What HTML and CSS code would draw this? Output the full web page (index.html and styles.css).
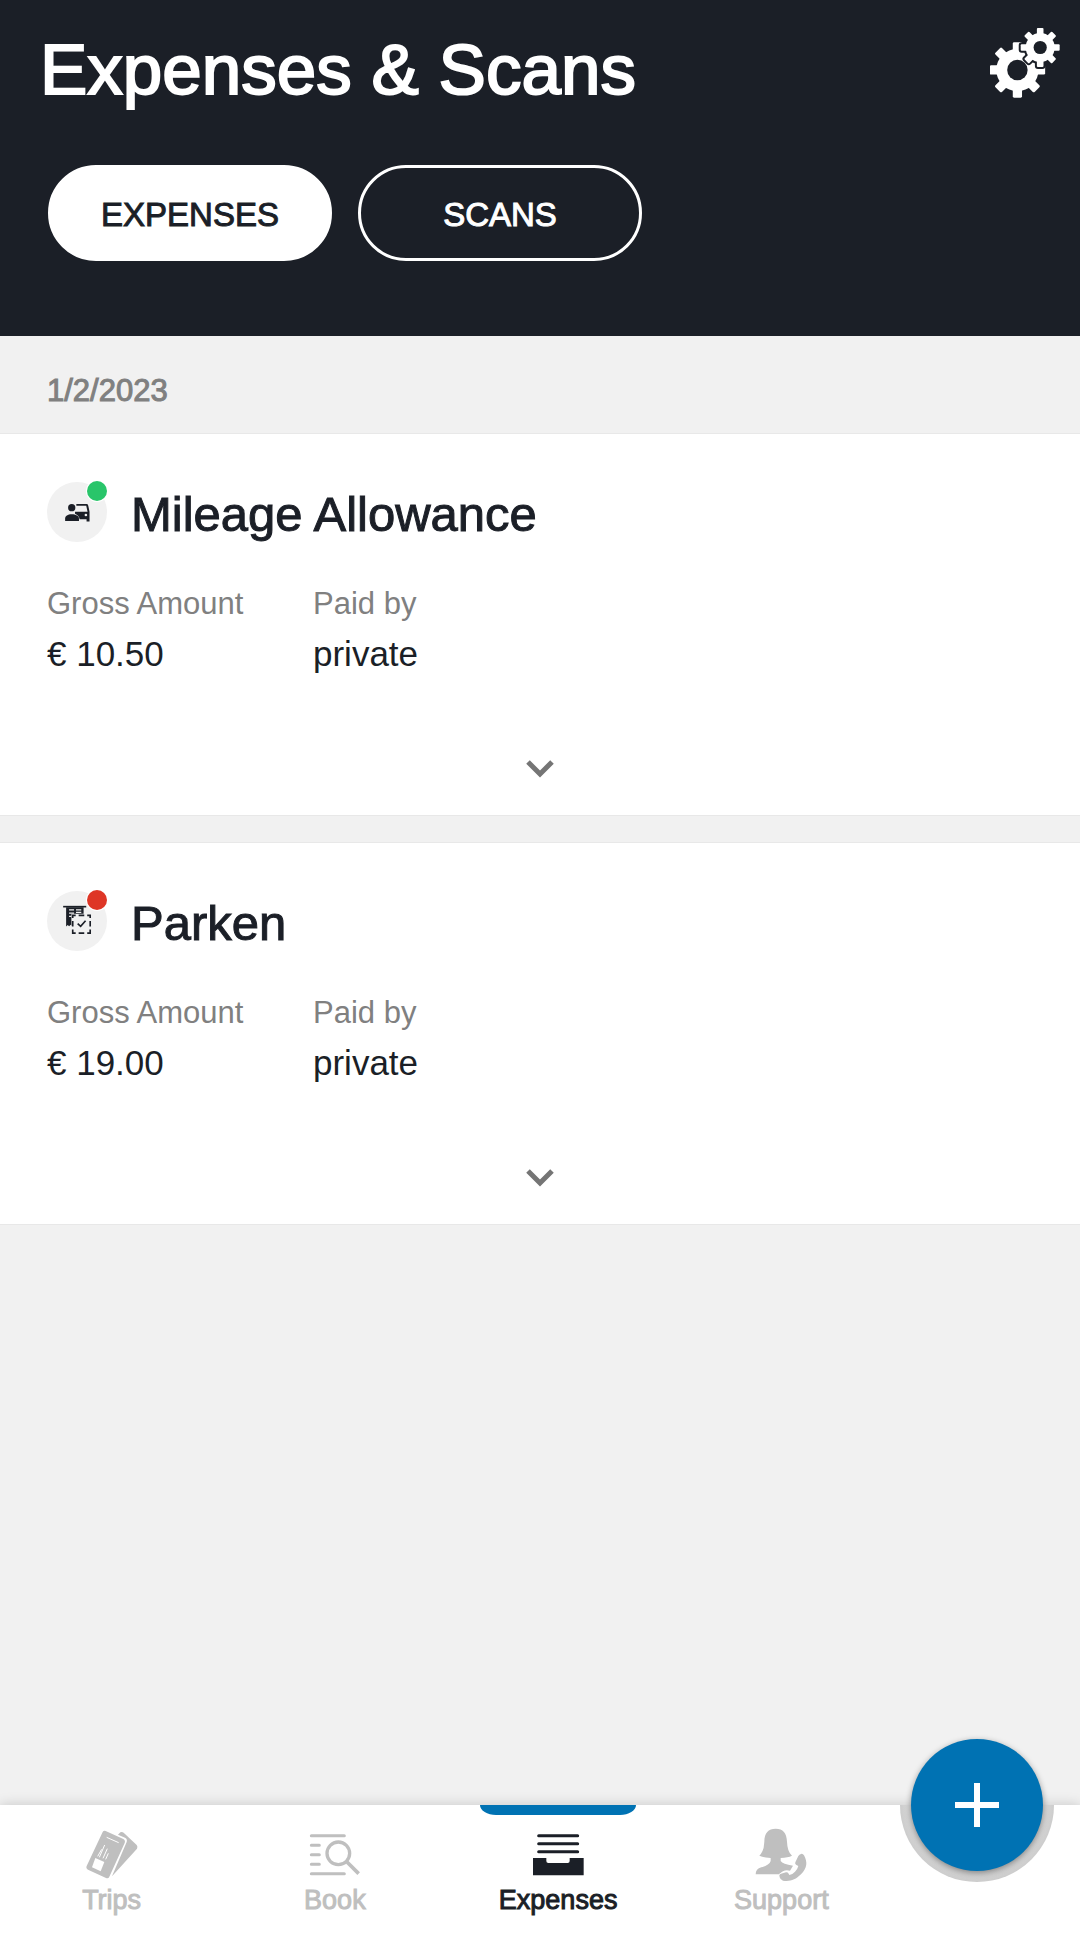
FILE: index.html
```
<!DOCTYPE html>
<html lang="en">
<head>
    <meta charset="UTF-8">
    <meta name="viewport" content="width=device-width, initial-scale=1.0">
    <title>Expenses &amp; Scans</title>
    <link rel="stylesheet" href="styles.css">
</head>
<body>
    <header>
        <div class="title-row">
            <h1>Expenses &amp; Scans</h1>
            <button type="button" class="settings" aria-label="Settings">
                <svg viewBox="56 52 212 212">
                    <defs>
                        <g id="big-gear">
                            <circle cx="139" cy="179" r="64"/>
                            <rect x="125" y="95" width="28" height="168" rx="4"/>
                            <rect x="125" y="95" width="28" height="168" rx="4" transform="rotate(45 139 179)"/>
                            <rect x="125" y="95" width="28" height="168" rx="4" transform="rotate(90 139 179)"/>
                            <rect x="125" y="95" width="28" height="168" rx="4" transform="rotate(135 139 179)"/>
                        </g>
                        <g id="small-gear">
                            <circle cx="208" cy="111" r="44"/>
                            <rect x="198" y="52" width="20" height="118" rx="3"/>
                            <rect x="198" y="52" width="20" height="118" rx="3" transform="rotate(45 208 111)"/>
                            <rect x="198" y="52" width="20" height="118" rx="3" transform="rotate(90 208 111)"/>
                            <rect x="198" y="52" width="20" height="118" rx="3" transform="rotate(135 208 111)"/>
                        </g>
                    </defs>
                    <use href="#big-gear" fill="#fff"/>
                    <circle cx="139" cy="179" r="31" fill="#1b1f27"/>
                    <use href="#small-gear" fill="#1b1f27" stroke="#1b1f27" stroke-width="12"/>
                    <use href="#small-gear" fill="#fff"/>
                    <circle cx="208" cy="111" r="20" fill="#1b1f27"/>
                </svg>
            </button>
        </div>
        <div class="pills">
            <button type="button" class="pill active">EXPENSES</button>
            <button type="button" class="pill">SCANS</button>
        </div>
    </header>

    <main>
        <p class="date">1/2/2023</p>

        <div class="cards">
            <section class="card">
                <div class="card-head">
                    <div class="badge">
                        <svg viewBox="20 32 182 182">
                            <circle cx="95" cy="110" r="11"/>
                            <path d="M75 150v-7c0-8 8-13 20-13s22 5 22 13v7z"/>
                            <path d="M109 99h31q4 0 5 4l4 19v30h-9v-7h-21c-1-8-6-14-14-17v-6h38l-4-18h-30z"/>
                            <circle cx="138" cy="132" r="4" fill="#f1f1f1"/>
                        </svg>
                        <span class="dot green"></span>
                    </div>
                    <h2>Mileage Allowance</h2>
                </div>
                <dl class="details">
                    <div>
                        <dt>Gross Amount</dt>
                        <dd>€ 10.50</dd>
                    </div>
                    <div>
                        <dt>Paid by</dt>
                        <dd>private</dd>
                    </div>
                </dl>
                <button type="button" class="expand" aria-label="Show details">
                    <svg viewBox="0 0 40 40"><path d="M8 14l12 12 12-12"/></svg>
                </button>
            </section>

            <section class="card">
                <div class="card-head">
                    <div class="badge">
                        <svg viewBox="20 32 182 182">
                            <path d="M69 77h70v5h-70z"/>
                            <path d="M78 81h53v20h-35v37l-4-4-5 5-4-4-5 5z"/>
                            <path d="M87 89h15M108 89h16M87 99h15M108 97h16M87 109h7" fill="none" stroke="#f1f1f1" stroke-width="4"/>
                            <rect x="94" y="102" width="60" height="60" fill="#f1f1f1"/>
                            <path d="M98 114v-8h9M116 106h17M142 106h9v8M151 123v17M151 149v11h-9M133 160h-17M107 160h-9v-11M98 140v-17" fill="none" stroke="#1b1f27" stroke-width="5"/>
                            <path d="M113 131l9 8 15-17" fill="none" stroke="#1b1f27" stroke-width="5"/>
                        </svg>
                        <span class="dot red"></span>
                    </div>
                    <h2>Parken</h2>
                </div>
                <dl class="details">
                    <div>
                        <dt>Gross Amount</dt>
                        <dd>€ 19.00</dd>
                    </div>
                    <div>
                        <dt>Paid by</dt>
                        <dd>private</dd>
                    </div>
                </dl>
                <button type="button" class="expand" aria-label="Show details">
                    <svg viewBox="0 0 40 40"><path d="M8 14l12 12 12-12"/></svg>
                </button>
            </section>
        </div>
    </main>

    <nav>
        <a href="#trips" class="tab">
            <svg viewBox="65 102 180 180">
                <path d="M173 134l7-7q5-3 10 1l39 37q4 5 1 11l-75 83 44-103q3-9-5-13z"/>
                <path d="M127 126q3-5 9-3l53 24q7 4 4 12l-46 101q-3 7-10 4l-54-25q-7-4-4-11z"/>
                <path d="M139 142l36 16M133 165l-16 37M141 176l-13 29M144 190l-8 18M124 178l-12 21" fill="none" stroke="#fff" stroke-width="3"/>
                <path d="M105 204l27 12-11 28-26-12z" fill="#fff"/>
            </svg>
            <span>Trips</span>
        </a>
        <a href="#book" class="tab">
            <svg viewBox="735 102 180 180">
                <g fill="none" stroke="currentColor" stroke-width="9" stroke-linecap="round">
                    <path d="M754 137h99M754 166h24M754 194h24M754 223h24M754 251h99"/>
                    <circle cx="835" cy="190" r="34" stroke-width="10"/>
                    <path d="M861 216l35 35" stroke-width="11" stroke-linecap="butt"/>
                </g>
            </svg>
            <span>Book</span>
        </a>
        <a href="#expenses" class="tab current">
            <svg viewBox="264 102 180 180">
                <path d="M296 137h117M296 161h117M296 185h117" stroke="currentColor" stroke-width="9" stroke-linecap="round"/>
                <path d="M279 204h40v9q0 6 6 6h58q6 0 6-6v-9h42v52H279z"/>
            </svg>
            <span>Expenses</span>
        </a>
        <a href="#support" class="tab">
            <svg viewBox="934 102 180 180">
                <path d="M959 197q14-12 15-42c0-26 12-39 34-39s33 13 34 39q1 30 15 42-12 6-34 7v9q6 10 37 14l-9 15q-18-6-32 11H948q0-16 17-21 24-6 28-19v-9q-22-1-34-7z"/>
                <path d="M1084 192q5-2 9 4c11 21 10 38-9 57-17 17-33 22-54 19q-8-2-10-10l-1-6q1-4 5-5l15-4q5-1 7 3l3 5q10-2 17-10 8-8 10-17l-7-4q-4-3-2-7l9-19q3-5 8-6z" fill="currentColor" stroke="#fff" stroke-width="4" paint-order="stroke"/>
            </svg>
            <span>Support</span>
        </a>
        <div class="fab-slot">
            <div class="notch"></div>
            <button type="button" class="fab" aria-label="Add expense">
                <svg viewBox="0 0 44 44"><path d="M22 0v44M0 22h44"/></svg>
            </button>
        </div>
    </nav>
</body>
</html>
```

FILE: styles.css
```
* {
    box-sizing: border-box;
}
body {
    display: flex;
    flex-direction: column;
    min-height: 100vh;
    margin: 0;
    font-family: "Liberation Sans", Arial, sans-serif;
    color: #1b1f27;
    background-color: #f1f1f1;
}
h1, h2, p, dl, dd {
    margin: 0;
}
button {
    padding: 0;
    border: none;
    background: none;
    font-family: inherit;
    color: inherit;
    cursor: pointer;
}
svg {
    display: block;
    fill: currentColor;
}

/* header */
header {
    padding: 28px 20px 75px 40px;
    background-color: #1b1f27;
    color: white;
}
.title-row {
    display: flex;
    justify-content: space-between;
    align-items: flex-start;
}
h1 {
    font-size: 71px;
    font-weight: normal;
    line-height: 84px;
    -webkit-text-stroke: 2px currentColor;
}
.settings svg {
    width: 70px;
    height: 70px;
}
.pills {
    display: flex;
    gap: 26px;
    margin: 53px 0 0 8px;
}
.pill {
    width: 284px;
    height: 96px;
    padding-top: 4px;
    border: 3px solid white;
    border-radius: 48px;
    font-size: 33px;
    -webkit-text-stroke: 1px currentColor;
}
.pill.active {
    background-color: white;
    color: #1b1f27;
}

/* expense list */
main {
    flex: 1;
}
.date {
    padding: 37px 47px 25px;
    font-size: 31px;
    line-height: 36px;
    color: #808080;
    -webkit-text-stroke: 1px currentColor;
}
.cards {
    display: flex;
    flex-direction: column;
    gap: 28px;
}
.card {
    padding: 48px 47px 27px;
    background-color: white;
    box-shadow: 0 0 0 1px #e8e8e8;
}
.card-head {
    display: flex;
    align-items: flex-start;
    gap: 24px;
}
.badge {
    position: relative;
    width: 60px;
    height: 60px;
    border-radius: 50%;
    background-color: #f1f1f1;
}
.dot {
    position: absolute;
    top: -1px;
    right: 0;
    width: 20px;
    height: 20px;
    border-radius: 50%;
    box-shadow: 0 0 0 1px white;
}
.green {
    background-color: #29c56a;
}
.red {
    background-color: #de3626;
}
h2 {
    font-size: 49px;
    font-weight: normal;
    line-height: 64px;
    -webkit-text-stroke: 1px currentColor;
}
.details {
    display: flex;
    margin-top: 40px;
}
.details div {
    width: 266px;
}
dt {
    font-size: 31px;
    line-height: 36px;
    color: #808080;
}
dd {
    margin-top: 11px;
    font-size: 35px;
    line-height: 42px;
}
.expand {
    display: block;
    margin: 73px auto 0;
    color: #757575;
}
.expand svg {
    width: 40px;
    height: 40px;
    fill: none;
    stroke: currentColor;
    stroke-width: 5px;
}

/* bottom bar */
nav {
    position: sticky;
    bottom: 0;
    display: flex;
    height: 129px;
    background-color: white;
    box-shadow: 0 0 12px rgba(0, 0, 0, 0.18);
}
.tab {
    position: relative;
    flex: 1;
    display: flex;
    flex-direction: column;
    align-items: center;
    padding-top: 19px;
    font-size: 27px;
    line-height: 32px;
    color: #bfbfbf;
    text-decoration: none;
}
.tab span {
    -webkit-text-stroke: 1px currentColor;
}
.tab svg {
    width: 60px;
    height: 60px;
}
.current {
    color: #1b1f27;
}
.current::before {
    content: "";
    position: absolute;
    top: 0;
    width: 156px;
    height: 10px;
    border-radius: 0 0 16px 16px / 0 0 10px 10px;
    background-color: #0072b3;
}
.fab-slot {
    position: relative;
    width: 187px;
}
.notch {
    position: absolute;
    top: 0;
    left: 7px;
    width: 154px;
    height: 77px;
    border-radius: 0 0 77px 77px;
    background: radial-gradient(circle at 50% 0, #d8d8d8 68px, #cccccc 77px);
}
.fab {
    position: absolute;
    top: -66px;
    left: 18px;
    width: 132px;
    height: 132px;
    border-radius: 50%;
    background-color: #0072b3;
    color: white;
    box-shadow: 0 2px 6px rgba(0, 0, 0, 0.4);
}
.fab svg {
    width: 44px;
    height: 44px;
    margin: 0 auto;
    stroke: currentColor;
    stroke-width: 6px;
}
```
